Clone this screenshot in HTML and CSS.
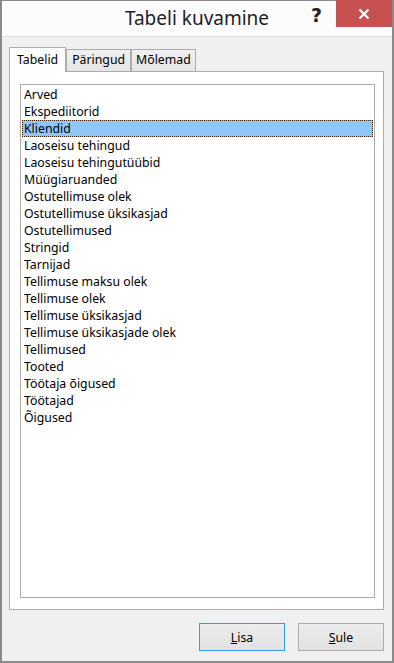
FILE: index.html
```html
<html>

<head>
    <link rel="stylesheet" href="styles.css">
</head>

<body>
    <div class="window">
        <header class="titlebar">
            <h1>Tabeli kuvamine</h1>
            <span class="help">?</span>
            <span class="close">
                <svg width="12" height="12" viewBox="0 0 12 12">
                    <path d="M1.5 1.5 L10.5 10.5 M10.5 1.5 L1.5 10.5" stroke="#fff" stroke-width="2.2" fill="none" />
                </svg>
            </span>
        </header>

        <div class="content">
            <div class="tabs">
                <div class="tab active">Tabelid</div>
                <div class="tab">Päringud</div>
                <div class="tab">Mõlemad</div>
            </div>
            <div class="panel">
                <ul class="list">
                    <li>Arved</li>
                    <li>Ekspediitorid</li>
                    <li class="selected">Kliendid</li>
                    <li>Laoseisu tehingud</li>
                    <li>Laoseisu tehingutüübid</li>
                    <li>Müügiaruanded</li>
                    <li>Ostutellimuse olek</li>
                    <li>Ostutellimuse üksikasjad</li>
                    <li>Ostutellimused</li>
                    <li>Stringid</li>
                    <li>Tarnijad</li>
                    <li>Tellimuse maksu olek</li>
                    <li>Tellimuse olek</li>
                    <li>Tellimuse üksikasjad</li>
                    <li>Tellimuse üksikasjade olek</li>
                    <li>Tellimused</li>
                    <li>Tooted</li>
                    <li>Töötaja õigused</li>
                    <li>Töötajad</li>
                    <li>Õigused</li>
                </ul>
            </div>
            <div class="buttons">
                <button class="btn default"><u>L</u>isa</button>
                <button class="btn"><u>S</u>ule</button>
            </div>
        </div>
    </div>
</body>

</html>
```

FILE: styles.css
```css
body {
    margin: 0;
    font-family: "Noto Sans", "Open Sans", sans-serif;
    font-size: 12.3px;
    color: #000;
}

.window {
    width: 394px;
    height: 663px;
    box-sizing: border-box;
    border: 2px solid #8a8a8a;
    border-top: 1px solid #8a8a8a;
    background-color: #f0f0f0;
    display: flex;
    flex-direction: column;
}

.titlebar {
    position: relative;
    height: 35px;
    background-color: #fcfcfc;
    border-bottom: 1px solid #e2e2e2;
}

.titlebar h1 {
    margin: 0;
    font-weight: normal;
    font-size: 19px;
    line-height: 34px;
    text-align: center;
    color: #1c1c2c;
}

.help {
    position: absolute;
    top: 3px;
    right: 70px;
    font-family: "DejaVu Sans", sans-serif;
    font-weight: bold;
    font-size: 19px;
    line-height: 22px;
    color: #222;
}

.close {
    position: absolute;
    top: -1px;
    right: 0;
    width: 56px;
    height: 27px;
    background-color: #c75050;
    display: flex;
    align-items: center;
    justify-content: center;
}

.content {
    flex: 1;
    padding: 10px 8px 0 7px;
    display: flex;
    flex-direction: column;
}

.tabs {
    display: flex;
    align-items: flex-end;
    height: 24px;
}

.tab {
    box-sizing: border-box;
    height: 22px;
    line-height: 20px;
    padding: 0 5px;
    border: 1px solid #acacac;
    border-bottom: none;
    background: linear-gradient(#f0f0f0, #e5e5e5);
}

.tab:last-child {
    padding: 0 4px;
}

.tab.active {
    position: relative;
    z-index: 1;
    height: 25px;
    line-height: 24px;
    margin-bottom: -1px;
    padding: 0 7px;
    background: #fff;
}

.panel {
    height: 539px;
    box-sizing: border-box;
    border: 1px solid #acacac;
    background-color: #fff;
    padding: 12px 8px 11px 10px;
}

.list {
    list-style: none;
    margin: 0;
    padding: 1px;
    height: 100%;
    box-sizing: border-box;
    border: 1px solid #acacac;
}

.list li {
    height: 17px;
    line-height: 18px;
    padding-left: 2px;
    white-space: nowrap;
}

.list li.selected {
    background-color: #90c6fa;
    outline: 1px dotted #3a2000;
    outline-offset: -1px;
}

.buttons {
    display: flex;
    justify-content: flex-end;
    gap: 13px;
    padding-top: 13px;
}

.btn {
    width: 86px;
    height: 28px;
    border: 1px solid #adadad;
    background: linear-gradient(#ececec, #e2e2e2);
    font-family: inherit;
    font-size: 12.3px;
    color: #000;
    padding: 0;
}

.btn.default {
    border-color: #3399ff;
}
```
